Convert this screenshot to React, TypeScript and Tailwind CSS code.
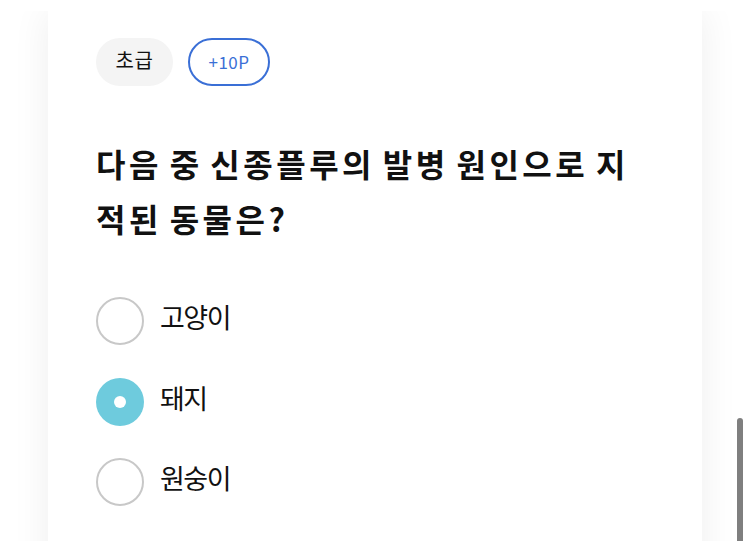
import React from "react";

const options = [
  { label: "고양이", selected: false },
  { label: "돼지", selected: true },
  { label: "원숭이", selected: false },
];

export default function App() {
  return (
    <div
      className="relative h-[541px] w-[750px] overflow-hidden bg-white"
      style={{ fontFamily: '"Noto Sans CJK KR", "Noto Sans", sans-serif' }}
    >
      <div className="mt-[11px] h-[530px] overflow-hidden px-[48px]">
        <div className="h-[600px] bg-white px-[48px] pt-[27px] shadow-[0_0_36px_rgba(0,0,0,0.07)]">
          <div className="flex gap-[15px]">
            <span className="flex h-[48px] w-[77px] items-center justify-center rounded-full bg-[#f4f4f4] pb-[4px] text-[20px] tracking-[0.5px] text-[#111]">
              초급
            </span>
            <span className="flex h-[48px] w-[82px] items-center justify-center rounded-full border-2 border-[#3a6fd6] text-[17px] tracking-[0.5px] text-[#3a6fd6]">
              +10P
            </span>
          </div>
          <h1 className="mt-[50px] text-[32px] font-bold leading-[55px] tracking-[3.5px] text-[#111] [word-spacing:-3px]">
            다음 중 신종플루의 발병 원인으로 지적된 동물은?
          </h1>
          <div className="mt-[51px] flex flex-col gap-[32px]">
            {options.map((o) => (
              <div key={o.label} className="flex items-center gap-[16px]">
                {o.selected ? (
                  <span className="flex h-[48px] w-[48px] items-center justify-center rounded-full bg-[#6ecbdd]">
                    <span className="h-[12px] w-[12px] rounded-full bg-white" />
                  </span>
                ) : (
                  <span className="h-[48px] w-[48px] rounded-full border-2 border-[#c8c8c8]" />
                )}
                <span className="pb-[8px] text-[27px] tracking-[-1.5px] text-[#111]">{o.label}</span>
              </div>
            ))}
          </div>
        </div>
      </div>
      <div className="absolute right-[7px] top-[418px] h-[140px] w-[6px] rounded-t-full bg-[#7f7f7f]" />
    </div>
  );
}
